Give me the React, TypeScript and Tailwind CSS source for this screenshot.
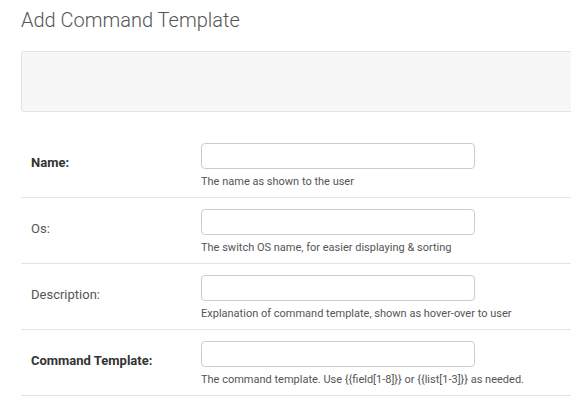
import React from "react";

interface Field {
  label: string;
  help: string;
  required?: boolean;
}

const fields: Field[] = [
  { label: "Name:", help: "The name as shown to the user", required: true },
  { label: "Os:", help: "The switch OS name, for easier displaying & sorting" },
  { label: "Description:", help: "Explanation of command template, shown as hover-over to user" },
  { label: "Command Template:", help: "The command template. Use {{field[1-8]}} or {{list[1-3]}} as needed.", required: true },
];

function FormRow({ label, help, required }: Field) {
  return (
    <div className="flex h-[66px] border-b border-[#e4e4e4]">
      <div className="w-[180px] shrink-0 pl-[10px] pt-[18px]">
        <span className={`text-[13px] ${required ? "font-bold text-[#333]" : "text-[#555]"}`}>{label}</span>
      </div>
      <div className="pt-[11px]">
        <input type="text" className="block w-[274px] h-[26px] border border-[#cccccc] rounded-[4px] bg-white px-2 text-[13px] outline-none" />
        <div className="mt-[5px] text-[11px] text-[#555]">{help}</div>
      </div>
    </div>
  );
}

export default function App() {
  return (
    <div className="w-full min-h-[419px] bg-white overflow-hidden" style={{ fontFamily: "Roboto, 'Liberation Sans', sans-serif" }}>
      <div className="w-[640px] pl-[21px]">
        <h1 className="pt-[7px] text-[20px] font-light leading-[26px] text-[#555]">Add Command Template</h1>

        <div className="mt-[18px] h-[61px] rounded-[3px] border border-[#e3e3e3] bg-[#f7f7f7]"></div>

        <div className="mt-[20px]">
          {fields.map((f) => (
            <FormRow key={f.label} {...f} />
          ))}
        </div>
      </div>
    </div>
  );
}
